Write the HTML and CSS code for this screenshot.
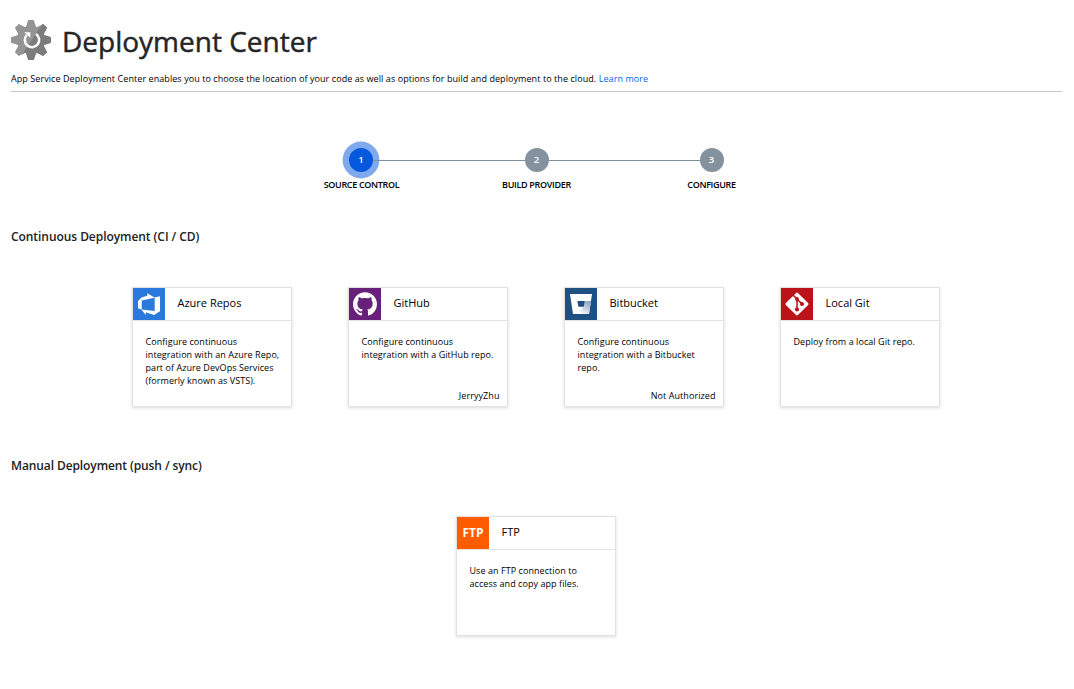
FILE: index.html
```html
<!DOCTYPE html>
<html lang="en">
<head>
<meta charset="utf-8">
<title>Deployment Center</title>
<link rel="stylesheet" href="styles.css">
</head>
<body>
<header class="header">
  <div class="title-row">
    <svg class="gear" viewBox="0 0 40 40">
      <defs>
        <clipPath id="shade"><path d="M34 0H40V40H7.5Z"/></clipPath>
        <path id="tooth" d="M15 7L17.2 0H22.8L25 7V12H15ZM15 33L17.2 40H22.8L25 33V28H15Z"/>
        <g id="cog">
          <circle cx="20" cy="20" r="14"/>
          <use href="#tooth"/>
          <use href="#tooth" transform="rotate(45 20 20)"/>
          <use href="#tooth" transform="rotate(90 20 20)"/>
          <use href="#tooth" transform="rotate(135 20 20)"/>
        </g>
      </defs>
      <use href="#cog" fill="#949494"/>
      <g clip-path="url(#shade)"><use href="#cog" fill="#7c7c7c"/></g>
      <path d="M25 14A7.2 7.2 0 1 1 15.8 15" fill="none" stroke="#fff" stroke-width="2.5"/>
      <path d="M13.2 12.2H19.3V17.8Z" fill="#fff"/>
    </svg>
    <h1 class="title">Deployment Center</h1>
  </div>
  <p class="intro">App Service Deployment Center enables you to choose the location of your code as well as options for build and deployment to the cloud. <a class="link">Learn more</a></p>
</header>

<ol class="steps">
  <li class="step active"><span class="dot">1</span><span class="step-label">SOURCE CONTROL</span></li>
  <li class="step"><span class="dot">2</span><span class="step-label">BUILD PROVIDER</span></li>
  <li class="step"><span class="dot">3</span><span class="step-label">CONFIGURE</span></li>
</ol>

<section class="group">
  <h2 class="heading">Continuous Deployment (CI / CD)</h2>
  <div class="cards">
    <article class="card">
      <div class="card-head">
        <svg class="tile azure" viewBox="0 0 32 32"><path fill="#fff" fill-rule="evenodd" d="M5 13L8.5 9.6L14.3 7.8V5.2L21.5 9.6L27 8.3V23.2L21 27L12.8 24.2V27L8.3 21.6L5 20.3ZM8.7 12.6V21.4L21.7 23V9.7Z"/></svg>
        <h3 class="name">Azure Repos</h3>
      </div>
      <p class="desc">Configure continuous<br>integration with an Azure Repo,<br>part of Azure DevOps Services<br>(formerly known as VSTS).</p>
    </article>
    <article class="card">
      <div class="card-head">
        <svg class="tile github" viewBox="0 0 32 32"><path transform="translate(4 4.2) scale(1.5)" fill="#fff" d="M8 0C3.58 0 0 3.58 0 8c0 3.54 2.29 6.53 5.47 7.59.4.07.55-.17.55-.38 0-.19-.01-.82-.01-1.49-2.01.37-2.53-.49-2.69-.94-.09-.23-.48-.94-.82-1.13-.28-.15-.68-.52-.01-.53.63-.01 1.08.58 1.23.82.72 1.21 1.87.87 2.33.66.07-.52.28-.87.51-1.07-1.78-.2-3.64-.89-3.64-3.95 0-.87.31-1.59.82-2.15-.08-.2-.36-1.02.08-2.12 0 0 .67-.21 2.2.82.64-.18 1.32-.27 2-.27s1.36.09 2 .27c1.53-1.04 2.2-.82 2.2-.82.44 1.1.16 1.92.08 2.12.51.56.82 1.27.82 2.15 0 3.07-1.87 3.75-3.65 3.95.29.25.54.73.54 1.48 0 1.07-.01 1.93-.01 2.2 0 .21.15.46.55.38A8.01 8.01 0 0 0 16 8c0-4.42-3.58-8-8-8z"/></svg>
        <h3 class="name">GitHub</h3>
      </div>
      <p class="desc">Configure continuous<br>integration with a GitHub repo.</p>
      <p class="status">JerryyZhu</p>
    </article>
    <article class="card">
      <div class="card-head">
        <svg class="tile bitbucket" viewBox="0 0 32 32">
          <defs><linearGradient id="fade" x1="1" y1="0" x2="0.25" y2="0.9"><stop offset="0" stop-color="#7d99b8"/><stop offset="1" stop-color="#fff"/></linearGradient></defs>
          <path fill="#fff" d="M5 6H27L24 26H8Z"/>
          <path fill="url(#fade)" d="M19.5 13H26L24 26H11L18.5 18.5Z"/>
          <path fill="#205081" d="M12.3 13H19.8L18.8 18.7H13.4Z"/>
        </svg>
        <h3 class="name">Bitbucket</h3>
      </div>
      <p class="desc">Configure continuous<br>integration with a Bitbucket<br>repo.</p>
      <p class="status">Not Authorized</p>
    </article>
    <article class="card">
      <div class="card-head">
        <svg class="tile git" viewBox="0 0 32 32">
          <rect x="7.5" y="7.5" width="17" height="17" rx="1.3" fill="#fff" transform="rotate(45 16 16)"/>
          <path d="M11.5 6.5L21 16M16 10.5V21" fill="none" stroke="#ba141a" stroke-width="1.6"/>
          <g fill="#ba141a"><circle cx="16" cy="11" r="1.9"/><circle cx="16" cy="21.5" r="2.1"/><circle cx="21" cy="16" r="2.1"/></g>
        </svg>
        <h3 class="name">Local Git</h3>
      </div>
      <p class="desc">Deploy from a local Git repo.</p>
    </article>
  </div>
</section>

<section class="group">
  <h2 class="heading manual">Manual Deployment (push / sync)</h2>
  <div class="cards">
    <article class="card">
      <div class="card-head">
        <div class="tile ftp">FTP</div>
        <h3 class="name">FTP</h3>
      </div>
      <p class="desc">Use an FTP connection to<br>access and copy app files.</p>
    </article>
  </div>
</section>
</body>
</html>
```

FILE: styles.css
```css
* { box-sizing: border-box; }
body { margin: 0; padding: 0 12px 0 11px; background: #fff; color: #000; font-family: "Open Sans", "Noto Sans", sans-serif; }
h1, h2, h3, p, ol { margin: 0; padding: 0; }
.header { height: 92px; border-bottom: 1px solid #c8c8c8; padding-top: 20px; }
.title-row { display: flex; height: 40px; gap: 11px; }
.gear { width: 40px; height: 40px; flex: none; }
.title { font-size: 28px; font-weight: 400; line-height: 42px; color: #252525; -webkit-text-stroke: 0.45px #252525; white-space: nowrap; }
.intro { margin-top: 12px; font-size: 9px; letter-spacing: 0.07px; line-height: 13px; white-space: nowrap; }
.link { color: #0066f0; }
.steps { list-style: none; display: flex; justify-content: center; padding-top: 56px; height: 108px; }
.step { position: relative; width: 175px; display: flex; flex-direction: column; align-items: center; }
.step + .step::before { content: ""; position: absolute; top: 12px; right: 99px; width: 152px; height: 1px; background: #7f919f; }
.dot { width: 24px; height: 24px; border-radius: 50%; background: #84929f; color: #fff; font-size: 9.5px; font-weight: 600; line-height: 24px; text-align: center; }
.active .dot { margin-right: 1px; background: #0458dd; box-shadow: 0 0 0 6.4px #80a9ed; }
.step-label { margin-top: 6px; font-size: 9px; letter-spacing: -0.32px; font-weight: 600; line-height: 13px; white-space: nowrap; }
.group { height: 229px; padding-top: 28px; }
.heading { font-size: 12px; font-weight: 600; letter-spacing: -0.06px; line-height: 18px; color: #222; white-space: nowrap; }
.manual { letter-spacing: -0.1px; }
.cards { display: flex; justify-content: center; gap: 56px; padding-top: 41px; margin-left: -1px; }
.card { width: 160px; height: 120px; border: 1px solid #e2e2e2; box-shadow: 0 1px 3px rgba(0,0,0,.15); display: flex; flex-direction: column; background: #fff; }
.card-head { height: 33px; flex: none; display: flex; border-bottom: 1px solid #e2e2e2; }
.tile { width: 32px; height: 32px; flex: none; }
.azure { background: #2a79dc; }
.github { background: #68217a; }
.bitbucket { background: #205081; }
.git { background: #ba141a; }
.ftp { background: #ff5c00; color: #fff; font-size: 12px; font-weight: 700; line-height: 32px; text-align: center; }
.name { margin-left: 12.5px; font-size: 11px; font-weight: 400; line-height: 29px; white-space: nowrap; }
.desc { padding: 14px 0 0 12.5px; font-size: 9px; letter-spacing: 0.06px; line-height: 13px; white-space: nowrap; }
.status { margin-top: auto; padding: 0 7.5px 4px 0; font-size: 9px; letter-spacing: 0.07px; line-height: 13px; text-align: right; }
```
